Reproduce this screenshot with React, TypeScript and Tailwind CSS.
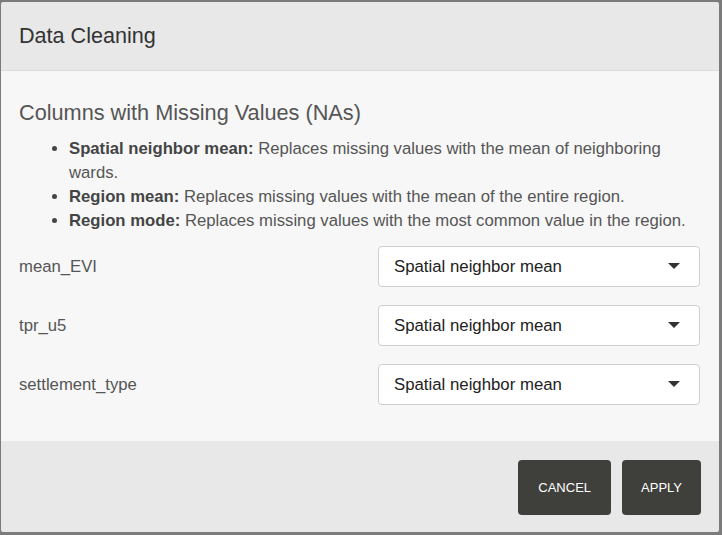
import React from 'react';

const methods = [
  { name: 'Spatial neighbor mean:', text: 'Replaces missing values with the mean of neighboring wards.' },
  { name: 'Region mean:', text: 'Replaces missing values with the mean of the entire region.' },
  { name: 'Region mode:', text: 'Replaces missing values with the most common value in the region.' },
];

const columns = ['mean_EVI', 'tpr_u5', 'settlement_type'];

function SelectBox() {
  return (
    <div className="w-[322px] h-[41px] bg-white border border-[#cfcfcf] rounded-[4px] flex items-center justify-between pl-[15px] pr-[19px]">
      <span className="text-[16.8px] text-[#222]">Spatial neighbor mean</span>
      <svg width="12" height="7" viewBox="0 0 12 7">
        <path d="M0 0 L12 0 L6 6 Z" fill="#333" />
      </svg>
    </div>
  );
}

export default function App() {
  return (
    <div
      className="w-[722px] h-[535px] bg-[#7b7b7b] pt-[2px] pl-[1px]"
      style={{ fontFamily: '"Liberation Sans", Arial, sans-serif' }}
    >
      <div className="w-[718px] h-[530px] rounded-[3px] overflow-hidden flex flex-col bg-[#f7f7f7]">
        {/* Header */}
        <div className="h-[69px] shrink-0 bg-[#e8e8e8] border-b border-[#dcdcdc] flex items-center pl-[18px] pr-[19px] pt-[1px]">
          <h1 className="text-[21.6px] text-[#333]">Data Cleaning</h1>
        </div>

        {/* Body */}
        <div className="flex-1 pl-[18px] pr-[19px] pt-[28px]">
          <h2 className="text-[21.7px] leading-[28px] text-[#555]">Columns with Missing Values (NAs)</h2>
          <ul className="list-disc pl-[50px] mt-[10px] text-[16.7px] leading-[24px] text-[#555] marker:text-[#444]">
            {methods.map((m) => (
              <li key={m.name}>
                <b className="font-bold text-[#444]">{m.name}</b>{' '}
                <span>{m.text}</span>
              </li>
            ))}
          </ul>
          <div className="mt-[13px] flex flex-col gap-[18px]">
            {columns.map((c) => (
              <div key={c} className="flex items-center justify-between">
                <span className="text-[16.7px] text-[#555]">{c}</span>
                <SelectBox />
              </div>
            ))}
          </div>
        </div>

        {/* Footer */}
        <div className="h-[91px] shrink-0 bg-[#e8e8e8] flex items-start justify-end gap-[11px] pt-[19px] pr-[18px]">
          <button className="h-[55px] px-[20px] rounded-[4px] bg-[#3f3f3b] text-white text-[13px] uppercase">
            Cancel
          </button>
          <button className="h-[55px] px-[19px] rounded-[4px] bg-[#3f3f3b] text-white text-[13px] uppercase">
            Apply
          </button>
        </div>
      </div>
    </div>
  );
}
